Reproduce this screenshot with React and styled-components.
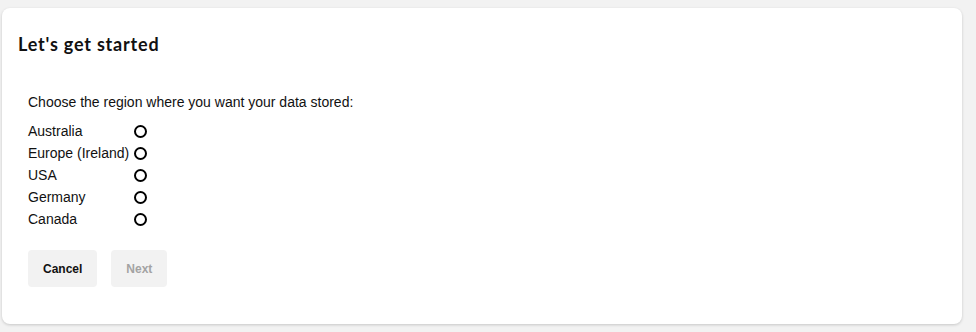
import React, { useState } from "react";
import styled, { createGlobalStyle } from "styled-components";

const GlobalStyle = createGlobalStyle`
  html, body {
    margin: 0;
    background: #f2f2f2;
  }
  body {
    font-family: "Liberation Sans", Arial, sans-serif;
  }
`;

const Page = styled.div`
  padding: 8px 14px 8px 2px;
`;

const Card = styled.div`
  background: #fff;
  border-radius: 8px;
  box-shadow: 0 1px 3px rgba(0, 0, 0, 0.18);
  height: 316px;
  box-sizing: border-box;
  padding: 26px 16px 0 14px;
`;

const Title = styled.h2`
  margin: 0 0 0 2px;
  font-family: Lato, "Open Sans", sans-serif;
  font-weight: 700;
  font-size: 18px;
  letter-spacing: 0.8px;
  line-height: 20px;
  color: #111;
`;

const Body = styled.div`
  padding: 39px 0 0 12px;
`;

const Prompt = styled.p`
  margin: 0 0 9px 0;
  font-size: 14px;
  line-height: 18px;
  color: #111;
`;

const Regions = styled.div`
  display: grid;
  grid-template-columns: auto auto;
  justify-content: start;
  column-gap: 5px;
`;

const RegionLabel = styled.label`
  font-size: 14px;
  line-height: 22px;
  color: #111;
`;

const Radio = styled.span`
  align-self: center;
  width: 13px;
  height: 13px;
  box-sizing: border-box;
  border: 2px solid #000;
  border-radius: 50%;
  background: ${(p) => (p.$checked ? "radial-gradient(#000 35%, #fff 40%)" : "#fff")};
  cursor: pointer;
`;

const Actions = styled.div`
  display: flex;
  gap: 14px;
  margin-top: 20px;
`;

const Button = styled.button`
  border: none;
  border-radius: 4px;
  background: #f2f2f2;
  height: 37px;
  padding: 0 15px;
  font-family: "Liberation Sans", Arial, sans-serif;
  font-weight: 700;
  font-size: 12px;
  color: ${(p) => (p.disabled ? "#a3a3a3" : "#111")};
  cursor: ${(p) => (p.disabled ? "default" : "pointer")};
`;

const regions = ["Australia", "Europe (Ireland)", "USA", "Germany", "Canada"];

export default function App() {
  const [selected, setSelected] = useState(null);

  return (
    <Page>
      <GlobalStyle />
      <Card>
        <Title>Let's get started</Title>
        <Body>
          <Prompt>Choose the region where you want your data stored:</Prompt>
          <Regions>
            {regions.map((r) => (
              <React.Fragment key={r}>
                <RegionLabel onClick={() => setSelected(r)}>{r}</RegionLabel>
                <Radio $checked={selected === r} onClick={() => setSelected(r)} />
              </React.Fragment>
            ))}
          </Regions>
          <Actions>
            <Button>Cancel</Button>
            <Button disabled={!selected}>Next</Button>
          </Actions>
        </Body>
      </Card>
    </Page>
  );
}
